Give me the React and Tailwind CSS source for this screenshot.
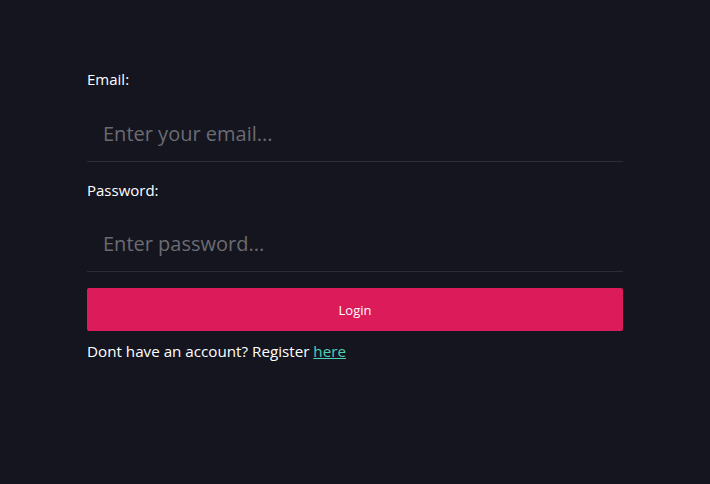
export default function App() {
  return (
    <div className="min-h-[484px] w-full bg-[#15151f] font-['Open_Sans',sans-serif] text-white">
      <form className="mx-auto flex w-[536px] flex-col pt-[68px]" onSubmit={(e) => e.preventDefault()}>
        <label className="text-[15px] leading-[22px]">Email:</label>
        <input
          type="email"
          placeholder="Enter your email..."
          className="mt-[16px] h-[56px] border-b border-[#2c2c38] bg-transparent px-4 text-[20px] text-white outline-none placeholder:text-[#6b6b72]"
        />
        <label className="mt-[17px] text-[15px] leading-[22px]">Password:</label>
        <input
          type="password"
          placeholder="Enter password..."
          className="mt-[15px] h-[56px] border-b border-[#2c2c38] bg-transparent px-4 text-[20px] text-white outline-none placeholder:text-[#6b6b72]"
        />
        <button className="mt-[16px] h-[43px] rounded-[2px] bg-[#dc1b5a] pt-[3px] text-[13px] text-white">
          Login
        </button>
        <p className="mt-[9px] text-[15.2px] leading-[22px]">
          Dont have an account? Register{" "}
          <a href="#" className="text-[#4fd1b5] underline">here</a>
        </p>
      </form>
    </div>
  );
}
